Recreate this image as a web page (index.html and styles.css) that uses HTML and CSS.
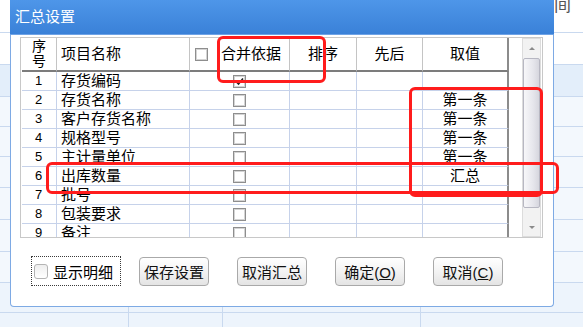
FILE: index.html
```html
<!DOCTYPE html>
<html lang="zh-CN">
<head>
    <meta charset="UTF-8">
    <title>汇总设置</title>
    <link rel="stylesheet" href="styles.css">
</head>
<body>
    <div class="screen">
        <div class="sheet">
            <div class="sheet-row h33 plain"><span class="peek">间</span></div>
            <div class="sheet-row h32 plain"></div>
            <div class="sheet-row h32 tint"></div>
            <div class="sheet-row h30"></div>
            <div class="sheet-row h30"></div>
            <div class="sheet-row h31"></div>
            <div class="sheet-row h32"></div>
            <div class="sheet-row h32"></div>
            <div class="sheet-row h31"></div>
            <div class="sheet-row h30 cols"><span></span><span></span><span></span></div>
            <div class="sheet-row h20 cols"><span></span><span></span><span></span></div>
        </div>

        <div class="dialog">
            <div class="titlebar">汇总设置</div>
            <div class="dialog-body">
                <div class="grid-frame">
                    <div class="grid">
                        <div class="head center seq">序<br>号</div>
                        <div class="head name">项目名称</div>
                        <div class="head merge"><span class="box"></span>合并依据</div>
                        <div class="head center">排序</div>
                        <div class="head center">先后</div>
                        <div class="head center last">取值</div>

                        <div class="num">1</div><div class="name">存货编码</div>
                        <div class="center"><span class="box checked"><svg width="11" height="11" viewBox="0 0 11 11"><polyline points="2,5.5 4.5,8 9,2.5" fill="none" stroke="#222" stroke-width="1.6"/></svg></span></div>
                        <div></div><div></div><div class="center last"></div>

                        <div class="num">2</div><div class="name">存货名称</div>
                        <div class="center"><span class="box"></span></div>
                        <div></div><div></div><div class="center last">第一条</div>

                        <div class="num">3</div><div class="name">客户存货名称</div>
                        <div class="center"><span class="box"></span></div>
                        <div></div><div></div><div class="center last">第一条</div>

                        <div class="num">4</div><div class="name">规格型号</div>
                        <div class="center"><span class="box"></span></div>
                        <div></div><div></div><div class="center last">第一条</div>

                        <div class="num">5</div><div class="name">主计量单位</div>
                        <div class="center"><span class="box"></span></div>
                        <div></div><div></div><div class="center last">第一条</div>

                        <div class="num">6</div><div class="name">出库数量</div>
                        <div class="center"><span class="box"></span></div>
                        <div></div><div></div><div class="center last">汇总</div>

                        <div class="num">7</div><div class="name">批号</div>
                        <div class="center"><span class="box"></span></div>
                        <div></div><div></div><div class="center last"></div>

                        <div class="num">8</div><div class="name">包装要求</div>
                        <div class="center"><span class="box"></span></div>
                        <div></div><div></div><div class="center last"></div>

                        <div class="num">9</div><div class="name">备注</div>
                        <div class="center"><span class="box"></span></div>
                        <div></div><div></div><div class="center last"></div>
                    </div>
                    <div class="scrollbar">
                        <div class="scroll-btn"><span class="arrow up"></span></div>
                        <div class="thumb"></div>
                        <div class="track"></div>
                        <div class="scroll-btn low"><span class="arrow down"></span></div>
                    </div>
                </div>

                <div class="actions">
                    <label class="detail"><span class="tick"></span>显示明细</label>
                    <button>保存设置</button>
                    <button>取消汇总</button>
                    <button>确定(<u>O</u>)</button>
                    <button>取消(<u>C</u>)</button>
                </div>
            </div>
        </div>

        <div class="mark mark-head"></div>
        <div class="mark mark-value"></div>
        <div class="mark mark-row"></div>
    </div>
</body>
</html>
```

FILE: styles.css
```css
* {
    margin: 0;
    padding: 0;
    box-sizing: border-box;
}

body {
    width: 583px;
    height: 327px;
    overflow: hidden;
    background: #ffffff;
    color: #000000;
    font-family: "Liberation Sans", "Noto Sans CJK SC", sans-serif;
}

.screen {
    position: relative;
    width: 583px;
    height: 327px;
    overflow: hidden;
}

/* spreadsheet behind the dialog */
.sheet {
    display: flex;
    flex-direction: column;
}

.sheet-row {
    border-bottom: 1px solid #c9d9ef;
    background: #f3f8fd;
    display: flex;
}

.sheet-row.plain {
    background: #ffffff;
}

.sheet-row.tint {
    background: #e3eefa;
}

.sheet-row.cols {
    background: #edf4fc;
}

.sheet-row.cols span {
    border-right: 1px solid #c9d9ef;
}

.sheet-row.cols span:nth-child(1) { width: 129px; }
.sheet-row.cols span:nth-child(2) { width: 94px; }
.sheet-row.cols span:nth-child(3) { width: 198px; }

.h33 { height: 33px; }
.h32 { height: 32px; }
.h31 { height: 31px; }
.h30 { height: 30px; }
.h20 { height: 20px; }

.peek {
    margin: -3px 0 0 554px;
    font-size: 17px;
    line-height: 17px;
    color: #555555;
}

/* dialog */
.dialog {
    position: absolute;
    left: 10px;
    top: 0;
    width: 544px;
    height: 307px;
    background: #ffffff;
    border: 1px solid #7eaae4;
    border-top: none;
    border-radius: 0 0 4px 4px;
    display: flex;
    flex-direction: column;
}

.titlebar {
    height: 35px;
    margin: 0 -1px;
    padding-left: 5px;
    background: linear-gradient(#4e96e9, #3a81d8);
    border-bottom: 1px solid #6fa3e6;
    color: #ffffff;
    font-size: 15px;
    line-height: 33px;
}

.dialog-body {
    padding: 2px 9px 0 9px;
}

.grid-frame {
    width: 523px;
    height: 201px;
    border: 1px solid #c8c8c8;
    padding-left: 1px;
    display: flex;
    overflow: hidden;
}

.grid {
    width: 487px;
    flex: none;
    display: grid;
    grid-template-columns: 35px 133px 100px 67px 66px 86px;
    grid-template-rows: 34px;
    grid-auto-rows: 19px;
    align-content: start;
    font-size: 15px;
    line-height: 18px;
}

.grid > div {
    border-right: 1px solid #c6d2ea;
    border-bottom: 1px solid #c6d2ea;
    display: flex;
    align-items: center;
    white-space: nowrap;
    overflow: hidden;
}

.grid > div.last {
    border-right: 2px solid #8c8c8c;
}

.grid .head {
    border-right-color: #c4c4c4;
    border-bottom: 2px solid #7c7c7c;
    line-height: 20px;
}

.grid .center {
    justify-content: center;
}

.grid .seq {
    font-size: 14px;
    line-height: 15px;
    text-align: center;
}

.grid .name {
    padding-left: 4px;
}

.grid .num {
    justify-content: center;
    font-size: 13px;
    padding-right: 1px;
}

.grid .merge {
    padding-left: 5px;
    gap: 13px;
}

.box {
    width: 13px;
    height: 13px;
    border: 1px solid #8e8e8e;
    box-shadow: inset 0 0 0 1px #d4d4d4;
    background: #ffffff;
    display: flex;
    align-items: center;
    justify-content: center;
    flex: none;
}

/* scrollbar */
.scrollbar {
    width: 19px;
    margin-left: 13px;
    background: #f2f2f2;
    border: 1px solid #dcdcdc;
    display: flex;
    flex-direction: column;
    align-items: center;
}

.scroll-btn {
    height: 19px;
    width: 100%;
    display: flex;
    align-items: center;
    justify-content: center;
}

.scroll-btn.low {
    height: 18px;
}

.arrow {
    width: 0;
    height: 0;
    border-left: 3px solid transparent;
    border-right: 3px solid transparent;
}

.arrow.up {
    border-bottom: 3px solid #8a8a8a;
}

.arrow.down {
    border-top: 3px solid #8a8a8a;
}

.thumb {
    width: 17px;
    height: 150px;
    border: 1px solid #b7b7c2;
    border-radius: 2px;
    background: linear-gradient(90deg, #f7f7f9, #e6e6ec 60%, #d6d6de);
}

.track {
    flex: 1;
}

/* buttons */
.actions {
    display: flex;
    align-items: center;
    gap: 28px;
    margin: 18px 0 0 11px;
}

.detail {
    width: 90px;
    height: 30px;
    margin-right: -10px;
    padding-left: 2px;
    border: 1px dotted #3a3a3a;
    display: flex;
    align-items: center;
    gap: 5px;
    font-size: 15px;
}

.tick {
    width: 14px;
    height: 15px;
    border: 1px solid #b4b4b4;
    border-radius: 3px;
    background: linear-gradient(#eeeeee, #ffffff);
}

button {
    width: 70px;
    height: 29px;
    border: 1px solid #a9a9a9;
    border-radius: 4px;
    background: linear-gradient(#ffffff, #f3f3f3 50%, #e4e4e4);
    font-family: inherit;
    font-size: 15px;
    color: #111111;
}

/* annotation boxes */
.mark {
    position: absolute;
    border: 3px solid #ff1c1c;
    border-radius: 6px;
}

.mark-head {
    left: 217px;
    top: 36px;
    width: 109px;
    height: 47px;
}

.mark-value {
    left: 409px;
    top: 87px;
    width: 134px;
    height: 110px;
}

.mark-row {
    left: 46px;
    top: 162px;
    width: 513px;
    height: 32px;
}
```
